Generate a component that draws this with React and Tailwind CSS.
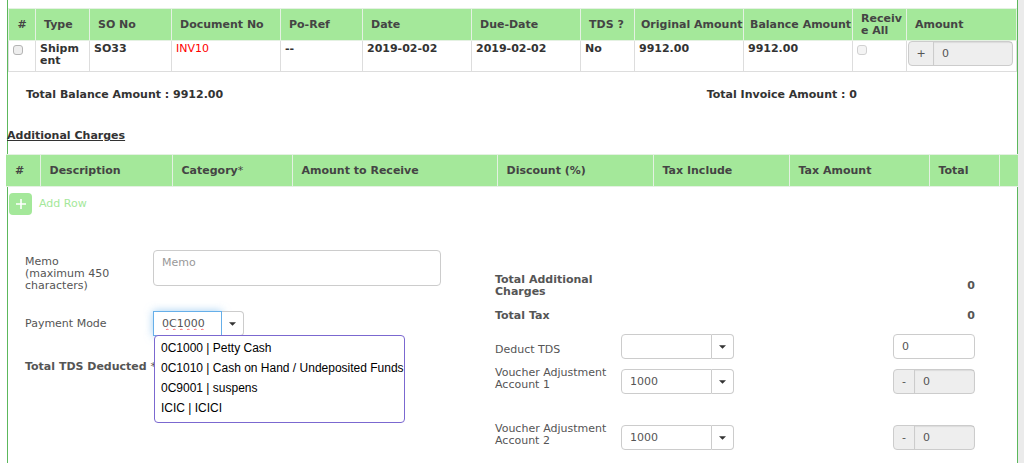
import { useState } from 'react'

const invoiceColumns = [
  { label: '#', width: 'w-[27px]', pad: 'text-center' },
  { label: 'Type', width: 'w-[54px]', pad: 'pl-2' },
  { label: 'SO No', width: 'w-[82px]', pad: 'pl-2' },
  { label: 'Document No', width: 'w-[109px]', pad: 'pl-2' },
  { label: 'Po-Ref', width: 'w-[82px]', pad: 'pl-2' },
  { label: 'Date', width: 'w-[109px]', pad: 'pl-2' },
  { label: 'Due-Date', width: 'w-[109px]', pad: 'pl-2' },
  { label: 'TDS ?', width: 'w-[54px]', pad: 'pl-2' },
  { label: 'Original Amount', width: 'w-[109px]', pad: 'pl-1.5 whitespace-nowrap' },
  { label: 'Balance Amount', width: 'w-[109px]', pad: 'pl-1.5 whitespace-nowrap' },
  { label: 'Receive All', width: 'w-[54px]', pad: 'pl-2 break-all' },
  { label: 'Amount', width: '', pad: 'pl-2' },
]

const chargeColumns = [
  { label: '#', width: 'w-[34px]' },
  { label: 'Description', width: 'w-[132px]' },
  { label: 'Category', required: true, width: 'w-[120px]' },
  { label: 'Amount to Receive', width: 'w-[205px]' },
  { label: 'Discount (%)', width: 'w-[156px]' },
  { label: 'Tax Include', width: 'w-[136px]' },
  { label: 'Tax Amount', width: 'w-[140px]' },
  { label: 'Total', width: 'w-[70px]' },
  { label: '', width: '' },
]

const accounts = [
  '0C1000 | Petty Cash',
  '0C1010 | Cash on Hand / Undeposited Funds',
  '0C9001 | suspens',
  'ICIC | ICICI',
]

const checkbox = 'block size-2.5 appearance-none rounded-[3px] border border-[#b4b4b4] bg-[#eee]'

function Caret() {
  return (
    <svg viewBox="0 0 8 4" className="h-1 w-[7px]" fill="#333">
      <path d="M0 0h8L4 4z" />
    </svg>
  )
}

function Combo({ id, value, onChange, active, onToggle, width }) {
  return (
    <div className={`flex h-[25px] ${width}`}>
      <input
        id={id}
        type="text"
        value={value}
        onChange={(e) => onChange(e.target.value)}
        spellCheck={false}
        className={
          active
            ? 'min-w-0 flex-1 border border-[#66afe9] px-2 outline-none shadow-[0_0_8px_rgba(102,175,233,0.6)] underline decoration-wavy decoration-red-400 decoration-1'
            : 'min-w-0 flex-1 rounded-l border border-[#ccc] px-2 outline-none'
        }
      />
      <button
        type="button"
        aria-label="Show options"
        onClick={onToggle}
        className="flex w-[22px] items-center justify-center rounded-r border border-l-0 border-[#ccc] bg-white"
      >
        <Caret />
      </button>
    </div>
  )
}

function SignedAmount({ sign, label, width, addon }) {
  return (
    <div className={`flex h-[25px] rounded border border-[#ccc] bg-[#eee] ${width}`}>
      <span className={`flex items-center justify-center border-r border-[#ccc] ${addon}`}>{sign}</span>
      <input
        type="text"
        aria-label={label}
        defaultValue="0"
        disabled
        className="min-w-0 flex-1 px-2 shadow-[inset_0_1px_1px_rgba(0,0,0,0.08)]"
      />
    </div>
  )
}

function VoucherRow({ id, label, value, onChange }) {
  return (
    <div className="flex h-[27px] items-end">
      <label htmlFor={id} className="w-[126px] self-start pr-2">{label}</label>
      <Combo id={id} value={value} onChange={onChange} width="w-[113px]" />
      <div className="ml-auto">
        <SignedAmount sign="-" label={`${label} amount`} width="w-[82px]" addon="w-[21px]" />
      </div>
    </div>
  )
}

function InvoiceTable() {
  const cell = 'border border-[#ddd] pt-0.5 pl-1 align-top'
  return (
    <table className="w-full table-fixed border-collapse text-left font-bold">
      <thead>
        <tr className="h-8 bg-[#a4e89a] text-[#444]">
          {invoiceColumns.map((col) => (
            <th key={col.label} className={`border border-[#e4f1e2] ${col.width} ${col.pad}`}>
              {col.label}
            </th>
          ))}
        </tr>
      </thead>
      <tbody>
        <tr className="h-[31px] text-[#333]">
          <td className={cell}>
            <input type="checkbox" aria-label="Select INV10" className={`mt-0.5 ${checkbox}`} />
          </td>
          <td className={`${cell} pr-2 break-all`}>Shipment</td>
          <td className={cell}>SO33</td>
          <td className={cell}>
            <a href="#inv10" className="font-normal text-[#f00]">INV10</a>
          </td>
          <td className={cell}>--</td>
          <td className={cell}>2019-02-02</td>
          <td className={cell}>2019-02-02</td>
          <td className={cell}>No</td>
          <td className={cell}>9912.00</td>
          <td className={cell}>9912.00</td>
          <td className={cell}>
            <input type="checkbox" aria-label="Receive all" disabled className={`mt-0.5 opacity-60 ${checkbox}`} />
          </td>
          <td className="border border-[#ddd] pr-[3px] pl-px align-top font-normal text-[#555]">
            <SignedAmount sign="+" label="Amount" width="w-full" addon="w-[25px]" />
          </td>
        </tr>
      </tbody>
    </table>
  )
}

function ChargesTable() {
  return (
    <table className="w-full table-fixed border-collapse text-left">
      <thead>
        <tr className="h-8 bg-[#a4e89a] text-[#444]">
          {chargeColumns.map((col) => (
            <th
              key={col.label}
              className={`border border-[#e4f1e2] pl-[9px] first:border-l-0 last:border-r-0 ${col.width}`}
            >
              {col.label}
              {col.required && <span className="font-normal">*</span>}
            </th>
          ))}
        </tr>
      </thead>
    </table>
  )
}

export default function App() {
  const [payment, setPayment] = useState('0C1000')
  const [open, setOpen] = useState(true)
  const [tds, setTds] = useState('')
  const [voucher1, setVoucher1] = useState('1000')
  const [voucher2, setVoucher2] = useState('1000')

  return (
    <div className="flex min-h-screen bg-white font-['Verdana','DejaVu_Sans',sans-serif] text-[11px] leading-3 text-[#555]">
      <div className="w-[7px] shrink-0" />
      <main className="min-w-0 flex-1 border-x border-[#5cb85c] pt-2">
        <InvoiceTable />

        <div className="mt-[17px] flex font-bold text-[#333]">
          <p className="w-2/3 pl-[18px]">Total Balance Amount : 9912.00</p>
          <p className="pl-[26px]">Total Invoice Amount : 0</p>
        </div>

        <h2 className="mt-[29px] -ml-px font-bold text-[#333] underline">Additional Charges</h2>

        <div className="-mx-0.5 mt-3">
          <ChargesTable />
        </div>

        <button type="button" className="mt-1.5 ml-px flex items-center gap-[7px] text-[#a4e89a]">
          <span className="flex h-[22px] w-[23px] items-center justify-center rounded bg-[#a4e89a]">
            <svg viewBox="0 0 10 10" className="size-2.5" stroke="#fff" strokeWidth="1.6">
              <path d="M5 0v10M0 5h10" />
            </svg>
          </span>
          Add Row
        </button>

        <div className="mt-[35px] flex pr-[42px] pl-[17px]">
          {/* Left: memo and payment mode */}
          <div className="w-[470px] shrink-0">
            <div className="flex">
              <label htmlFor="memo" className="w-32 pt-1.5 pr-6">
                Memo
                <br />
                (maximum 450 characters)
              </label>
              <textarea
                id="memo"
                placeholder="Memo"
                className="h-9 w-72 resize-none rounded border border-[#ccc] px-2 py-1.5 placeholder:text-[#999]"
              />
            </div>

            <div className="mt-[19px] flex items-center">
              <label htmlFor="payment" className="w-32">Payment Mode</label>
              <div className="relative">
                <Combo
                  id="payment"
                  value={payment}
                  onChange={setPayment}
                  active
                  onToggle={() => setOpen(!open)}
                  width="w-[91px]"
                />
                {open && (
                  <ul className="absolute top-6 left-px z-10 w-[251px] rounded border border-[#7b68d0] bg-white pt-0.5 pb-1 font-['Liberation_Sans',Arial,sans-serif] text-xs leading-5 text-black">
                    {accounts.map((account) => (
                      <li key={account}>
                        <button
                          type="button"
                          className="block w-full px-1.5 text-left whitespace-nowrap"
                          onClick={() => {
                            setPayment(account.split(' | ')[0])
                            setOpen(false)
                          }}
                        >
                          {account}
                        </button>
                      </li>
                    ))}
                  </ul>
                )}
              </div>
            </div>

            <p className="mt-[25px] font-bold">
              Total TDS Deducted <span className="font-normal">*</span>
            </p>
          </div>

          {/* Right: totals and voucher adjustments */}
          <div className="min-w-0 flex-1 pt-6">
            <div className="flex items-center justify-between font-bold">
              <p className="w-[126px] pr-4">Total Additional Charges</p>
              <span>0</span>
            </div>
            <div className="mt-3 flex items-center justify-between font-bold">
              <p>Total Tax</p>
              <span>0</span>
            </div>

            <div className="mt-3 flex">
              <label htmlFor="tds" className="w-[126px] pt-2.5">Deduct TDS</label>
              <Combo id="tds" value={tds} onChange={setTds} width="w-[113px]" />
              <input
                type="text"
                aria-label="TDS amount"
                defaultValue="0"
                className="ml-auto h-[25px] w-[82px] rounded border border-[#ccc] px-2"
              />
            </div>

            <div className="mt-2 flex flex-col gap-[29px]">
              <VoucherRow id="voucher1" label="Voucher Adjustment Account 1" value={voucher1} onChange={setVoucher1} />
              <VoucherRow id="voucher2" label="Voucher Adjustment Account 2" value={voucher2} onChange={setVoucher2} />
            </div>
          </div>
        </div>
      </main>
      <div className="w-1.5 shrink-0 bg-[#ebebeb]" />
    </div>
  )
}
